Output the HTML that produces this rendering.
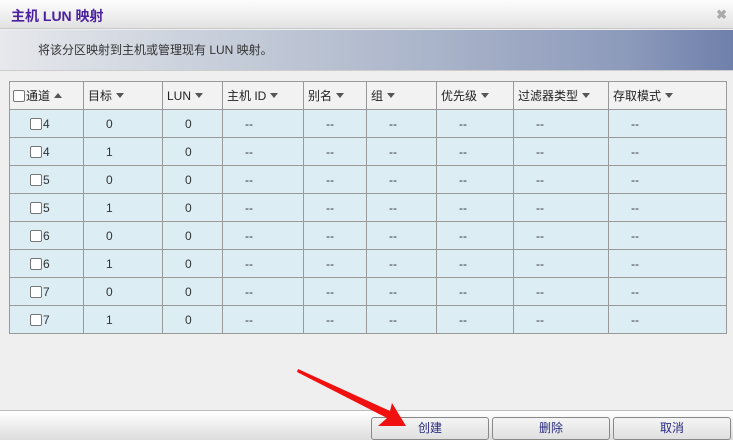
<!DOCTYPE html>
<html><head><meta charset="utf-8"><style>
*{margin:0;padding:0;box-sizing:border-box}
body{width:733px;height:440px;overflow:hidden;background:#efefef;font-family:"Liberation Sans","Noto Sans CJK SC",sans-serif;font-size:12px;color:#333;position:relative}
.title{position:absolute;left:0;top:0;width:733px;height:29px;background:linear-gradient(#fdfdfd,#e2e2e2);border-bottom:1px solid #c8c8c8}
.tt{position:absolute;left:11px;top:6px;font-size:14px;font-weight:bold;color:#4a1fa0}
.x{position:absolute;right:6px;top:7px;color:#aaa;font-size:13px;font-weight:bold}
.hdr{position:absolute;left:0;top:30px;width:733px;height:41px;background:linear-gradient(90deg,#e6e8ec 0%,#c7ceda 30%,#a9b3c9 60%,#8d9bbc 85%,#6f80ab 100%);border-bottom:1px solid #ccc}
.hdr span{position:absolute;left:38px;top:11px;font-size:12px;color:#333}
table{position:absolute;left:9px;top:81px;border-collapse:collapse}
td,th{border:1px solid #999;height:28px;padding:0;font-weight:normal;font-size:12px}
th{background:#f2f2f2;text-align:left;padding-left:4px;color:#222}
td{background:#dcedf4;text-align:left;padding-left:22px;color:#333}
.cb{display:inline-block;width:12px;height:12px;border:1px solid #777;border-radius:2px;background:#fff;vertical-align:-2px;margin-right:1px}
.dn{display:inline-block;width:0;height:0;border-left:4px solid transparent;border-right:4px solid transparent;border-top:5px solid #555;vertical-align:2px;margin-left:4px}
.up{display:inline-block;width:0;height:0;border-left:4px solid transparent;border-right:4px solid transparent;border-bottom:5px solid #555;vertical-align:2px;margin-left:4px}
.foot{position:absolute;left:0;top:410px;width:733px;height:30px;background:linear-gradient(#fff,#dcdcdc);border-top:1px solid #bbb}
.btn{position:absolute;top:417px;width:118px;height:23px;border:1px solid #888;border-radius:3px;background:linear-gradient(#f4f4f4,#e0e0e0);text-align:center;line-height:21px;color:#2a2a80;font-size:12px}
</style></head><body>
<div class="title"><span class="tt">主机 LUN 映射</span><span class="x">✖</span></div>
<div class="hdr"><span>将该分区映射到主机或管理现有 LUN 映射。</span></div>
<table>
<tr><th style="width:74px;padding-left:3px"><span class="cb"></span>通道<span class="up"></span></th><th style="width:79px">目标<span class="dn"></span></th><th style="width:60px">LUN<span class="dn"></span></th><th style="width:81px">主机 ID<span class="dn"></span></th><th style="width:63px">别名<span class="dn"></span></th><th style="width:70px">组<span class="dn"></span></th><th style="width:77px">优先级<span class="dn"></span></th><th style="width:95px">过滤器类型<span class="dn"></span></th><th style="width:118px">存取模式<span class="dn"></span></th></tr>
<tr><td style="padding-left:20px"><span class="cb"></span>4</td><td>0</td><td>0</td><td>--</td><td>--</td><td>--</td><td>--</td><td>--</td><td>--</td></tr>
<tr><td style="padding-left:20px"><span class="cb"></span>4</td><td>1</td><td>0</td><td>--</td><td>--</td><td>--</td><td>--</td><td>--</td><td>--</td></tr>
<tr><td style="padding-left:20px"><span class="cb"></span>5</td><td>0</td><td>0</td><td>--</td><td>--</td><td>--</td><td>--</td><td>--</td><td>--</td></tr>
<tr><td style="padding-left:20px"><span class="cb"></span>5</td><td>1</td><td>0</td><td>--</td><td>--</td><td>--</td><td>--</td><td>--</td><td>--</td></tr>
<tr><td style="padding-left:20px"><span class="cb"></span>6</td><td>0</td><td>0</td><td>--</td><td>--</td><td>--</td><td>--</td><td>--</td><td>--</td></tr>
<tr><td style="padding-left:20px"><span class="cb"></span>6</td><td>1</td><td>0</td><td>--</td><td>--</td><td>--</td><td>--</td><td>--</td><td>--</td></tr>
<tr><td style="padding-left:20px"><span class="cb"></span>7</td><td>0</td><td>0</td><td>--</td><td>--</td><td>--</td><td>--</td><td>--</td><td>--</td></tr>
<tr><td style="padding-left:20px"><span class="cb"></span>7</td><td>1</td><td>0</td><td>--</td><td>--</td><td>--</td><td>--</td><td>--</td><td>--</td></tr>
</table>
<div class="foot"></div>
<div class="btn" style="left:371px">创建</div>
<div class="btn" style="left:492px">删除</div>
<div class="btn" style="left:613px">取消</div>
<svg style="position:absolute;left:0;top:0" width="733" height="440"><polygon points="298,369 390,411 392,403 406,426 378,426 387,418 297,372" fill="#f01010"/></svg>
</body></html>
